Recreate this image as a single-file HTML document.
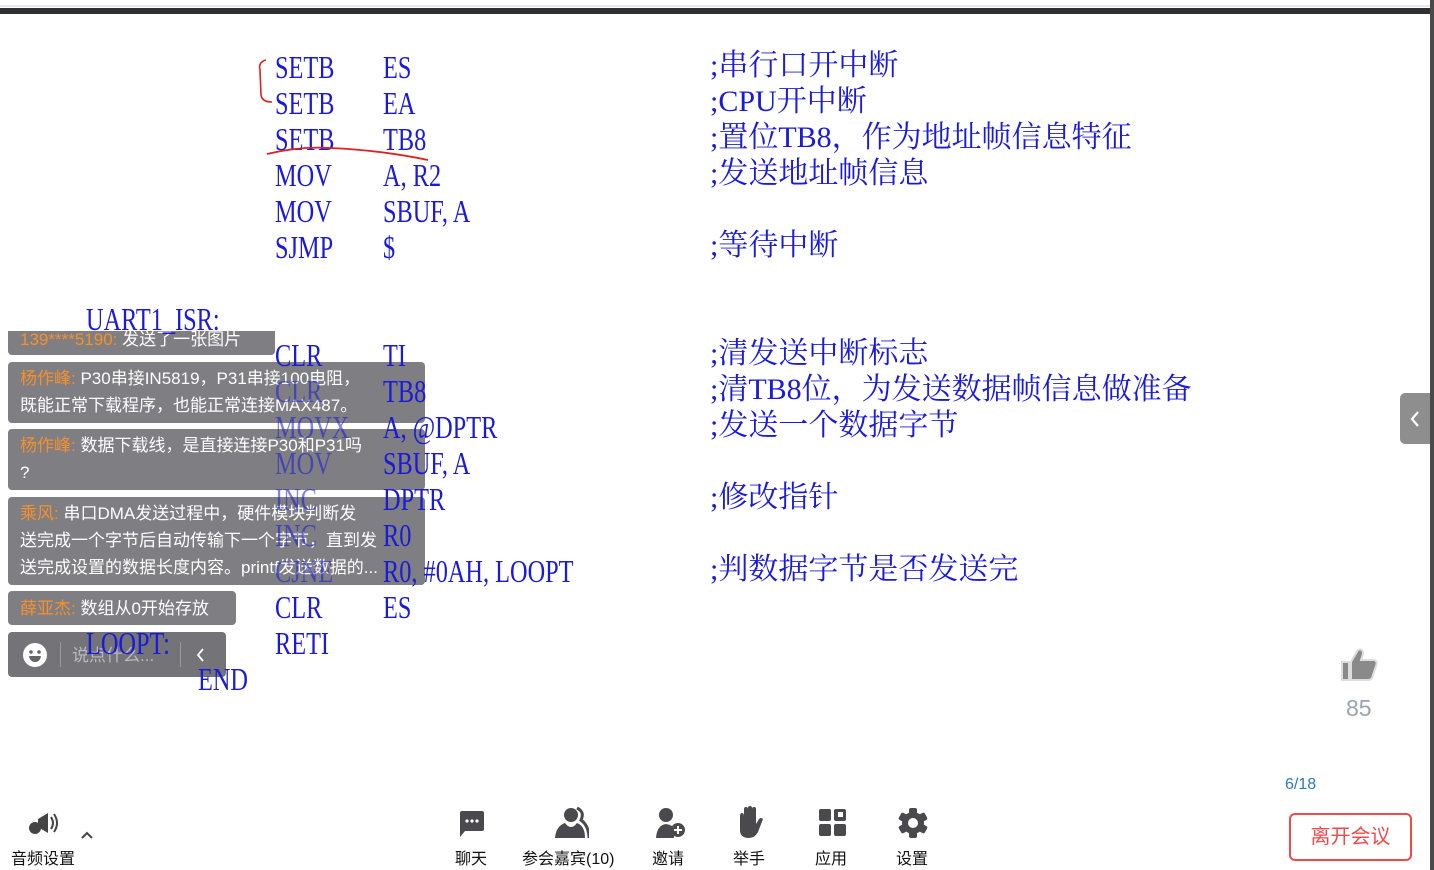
<!DOCTYPE html>
<html><head><meta charset="utf-8"><style>
*{margin:0;padding:0;box-sizing:border-box}
body{width:1434px;height:870px;background:#fff;position:relative;overflow:hidden;font-family:"Liberation Sans","Noto Sans CJK SC",sans-serif}
.c{position:absolute;font-family:"Liberation Serif","Noto Serif CJK SC",serif;font-size:32px;line-height:36px;color:#1a1ad8;white-space:nowrap;transform-origin:0 50%;transform:scaleX(0.76)}
.z{position:absolute;font-family:"Liberation Serif","Noto Serif CJK SC",serif;font-size:30px;line-height:36px;color:#1a1ad8;white-space:nowrap}
.b{position:absolute;left:8px;background:rgba(90,90,96,0.78);border-radius:4px;color:#fff;font-size:17px;line-height:27px;padding:0 12px;white-space:nowrap}
.b .n{color:#f7902a}
.t{position:absolute;top:845px;font-size:16px;color:#111;white-space:nowrap}
</style></head><body>
<div style="position:absolute;left:0;top:5px;width:1430px;height:2px;background:#e8e8ec"></div>
<div style="position:absolute;left:0;top:8px;width:1430px;height:6px;background:#2d3033"></div>
<div style="position:absolute;left:1430px;top:0;width:4px;height:870px;background:#4a4a4a"></div>

<!-- chat -->
<div class="b" style="top:331px;height:24px;line-height:18px;border-radius:0 0 4px 4px;width:267px;overflow:hidden"><span class="n">139****5190:</span> 发送了一张图片</div>
<div class="b" style="top:362px;height:61px;padding-top:3px;width:417px"><span class="n">杨作峰:</span> P30串接IN5819，P31串接100电阻，<br>既能正常下载程序，也能正常连接MAX487。</div>
<div class="b" style="top:429px;height:61px;padding-top:3px;width:417px"><span class="n">杨作峰:</span> 数据下载线，是直接连接P30和P31吗<br>?</div>
<div class="b" style="top:497px;height:88px;padding-top:3px;width:417px"><span class="n">乘风:</span> 串口DMA发送过程中，硬件模块判断发<br>送完成一个字节后自动传输下一个字节，直到发<br>送完成设置的数据长度内容。printf发送数据的...</div>
<div class="b" style="top:591px;height:34px;padding-top:4px;width:228px"><span class="n">薛亚杰:</span> 数组从0开始存放</div>
<div class="b" style="top:632px;height:45px;width:218px;background:rgba(90,90,96,0.85)">
 <svg style="position:absolute;left:14px;top:10px" width="26" height="26"><circle cx="13" cy="13" r="12" fill="#fff"/><circle cx="9" cy="10" r="1.8" fill="#666"/><circle cx="17" cy="10" r="1.8" fill="#666"/><path d="M7 14 H19 Q18 20 13 20 Q8 20 7 14Z" fill="#666"/></svg>
 <div style="position:absolute;left:52px;top:10px;width:1px;height:25px;background:#999"></div>
 <div style="position:absolute;left:64px;top:10px;color:#bbb;font-size:17px">说点什么...</div>
 <div style="position:absolute;left:172px;top:10px;width:1px;height:25px;background:#999"></div>
 <svg style="position:absolute;left:188px;top:15px" width="10" height="16"><path d="M7 2 L2 8 L7 14" fill="none" stroke="#fff" stroke-width="1.8"/></svg>
</div>

<!-- code -->
<div class="c" style="left:275px;top:49px">SETB</div><div class="c" style="left:383px;top:49px">ES</div><div class="z" style="left:710px;top:48px">;串行口开中断</div>
<div class="c" style="left:275px;top:85px">SETB</div><div class="c" style="left:383px;top:85px">EA</div><div class="z" style="left:710px;top:84px">;CPU开中断</div>
<div class="c" style="left:275px;top:121px">SETB</div><div class="c" style="left:383px;top:121px">TB8</div><div class="z" style="left:710px;top:120px">;置位TB8，作为地址帧信息特征</div>
<div class="c" style="left:275px;top:157px">MOV</div><div class="c" style="left:383px;top:157px">A, R2</div><div class="z" style="left:710px;top:156px">;发送地址帧信息</div>
<div class="c" style="left:275px;top:193px">MOV</div><div class="c" style="left:383px;top:193px">SBUF, A</div>
<div class="c" style="left:275px;top:229px">SJMP</div><div class="c" style="left:383px;top:229px">$</div><div class="z" style="left:710px;top:228px">;等待中断</div>
<div class="c" style="left:86px;top:301px">UART1_ISR:</div>
<div class="c" style="left:275px;top:337px">CLR</div><div class="c" style="left:383px;top:337px">TI</div><div class="z" style="left:710px;top:336px">;清发送中断标志</div>
<div class="c" style="left:275px;top:373px;opacity:.55">CLR</div><div class="c" style="left:383px;top:373px">TB8</div><div class="z" style="left:710px;top:372px">;清TB8位，为发送数据帧信息做准备</div>
<div class="c" style="left:275px;top:409px;opacity:.55">MOVX</div><div class="c" style="left:383px;top:409px">A, @DPTR</div><div class="z" style="left:710px;top:408px">;发送一个数据字节</div>
<div class="c" style="left:275px;top:445px;opacity:.55">MOV</div><div class="c" style="left:383px;top:445px">SBUF, A</div>
<div class="c" style="left:275px;top:481px;opacity:.55">INC</div><div class="c" style="left:383px;top:481px">DPTR</div><div class="z" style="left:710px;top:480px">;修改指针</div>
<div class="c" style="left:275px;top:517px;opacity:.55">INC</div><div class="c" style="left:383px;top:517px">R0</div>
<div class="c" style="left:275px;top:553px;opacity:.55">CJNE</div><div class="c" style="left:383px;top:553px">R0, #0AH, LOOPT</div><div class="z" style="left:710px;top:552px">;判数据字节是否发送完</div>
<div class="c" style="left:275px;top:589px">CLR</div><div class="c" style="left:383px;top:589px">ES</div>
<div class="c" style="left:275px;top:625px">RETI</div>
<div class="c" style="left:86px;top:625px">LOOPT:</div>
<div class="c" style="left:198px;top:661px">END</div>

<svg style="position:absolute;left:0;top:0" width="500" height="170"><path d="M266 60 Q258 62 260 70 L261 95 Q262 102 272 102" fill="none" stroke="#d22" stroke-width="1.6"/><path d="M267 154 Q300 146 330 148 Q380 150 428 160" fill="none" stroke="#d22" stroke-width="1.8"/></svg>

<!-- right -->
<div style="position:absolute;left:1400px;top:393px;width:30px;height:51px;background:#8e8e8e;border-radius:5px 0 0 5px"><svg style="position:absolute;left:9px;top:17px" width="12" height="18"><path d="M9 2 L3 9 L9 16" fill="none" stroke="#fff" stroke-width="2.2"/></svg></div>
<svg style="position:absolute;left:1338px;top:646px" width="42" height="38"><path d="M4 16 H11 V34 H4Z M13 16 L20 4 Q25 2 25 8 L23 14 H36 Q40 15 38 20 L34 32 Q33 34 30 34 H13Z" fill="#8a8a8a" stroke="#ddd" stroke-width="2"/></svg>
<div style="position:absolute;left:1346px;top:695px;font-size:23px;color:#9aa3b0">85</div>
<div style="position:absolute;left:1285px;top:776px;font-size:16px;color:#2a7ac0">6/18</div>
<div style="position:absolute;left:1289px;top:813px;width:123px;height:48px;border:2px solid #f04a4a;border-radius:6px;color:#f04a4a;font-size:20px;line-height:44px;text-align:center">离开会议</div>

<!-- toolbar -->
<svg style="position:absolute;left:26px;top:811px" width="40" height="26"><circle cx="9" cy="17" r="6" fill="#444"/><path d="M12 8 L22 2 V22 L12 16Z" fill="#444"/><path d="M25 6 Q29 12 25 18 M28 3 Q34 12 28 21" fill="none" stroke="#444" stroke-width="2"/></svg>
<svg style="position:absolute;left:80px;top:830px" width="14" height="10"><path d="M2 8 L7 3 L12 8" fill="none" stroke="#444" stroke-width="2"/></svg>
<div class="t" style="left:11px">音频设置</div>
<svg style="position:absolute;left:457px;top:809px" width="30" height="30"><path d="M3 4 Q3 2 5 2 H25 Q27 2 27 4 V20 Q27 22 25 22 H8 L3 28Z" fill="#4a4a4e"/><circle cx="10" cy="12" r="1.6" fill="#fff"/><circle cx="15" cy="12" r="1.6" fill="#fff"/><circle cx="20" cy="12" r="1.6" fill="#fff"/></svg>
<div class="t" style="left:455px">聊天</div>
<svg style="position:absolute;left:551px;top:806px" width="38" height="32"><circle cx="20" cy="9" r="7" fill="#4a4a4e"/><path d="M4 32 Q5 20 14 17 Q20 25 26 17 Q34 20 34 32Z" fill="#4a4a4e"/><path d="M26 2 Q34 6 30 14 Q38 20 38 32" fill="none" stroke="#4a4a4e" stroke-width="3"/></svg>
<div class="t" style="left:522px">参会嘉宾(10)</div>
<svg style="position:absolute;left:654px;top:806px" width="34" height="32"><circle cx="12" cy="9" r="7" fill="#4a4a4e"/><path d="M2 32 Q3 19 12 18 Q18 19 20 22 V32Z" fill="#4a4a4e"/><circle cx="24" cy="24" r="7" fill="#4a4a4e"/><path d="M24 20 V28 M20 24 H28" stroke="#fff" stroke-width="2"/></svg>
<div class="t" style="left:652px">邀请</div>
<svg style="position:absolute;left:736px;top:806px" width="30" height="32"><path d="M4 10 Q4 7 6 7 Q8 7 8 10 V3 Q8 1 10 1 Q12 1 12 3 V2 Q12 0 14 0 Q16 0 16 2 V3 Q16 1 18 1 Q20 1 20 3 V18 L23 13 Q25 11 27 13 L22 26 Q19 32 13 32 Q4 32 4 24Z" fill="#4a4a4e"/></svg>
<div class="t" style="left:733px">举手</div>
<svg style="position:absolute;left:818px;top:808px" width="30" height="30"><rect x="1" y="1" width="12" height="12" rx="2" fill="#4a4a4e"/><rect x="16" y="1" width="12" height="12" rx="2" fill="#4a4a4e"/><rect x="20" y="4" width="5" height="5" fill="#fff"/><rect x="1" y="16" width="12" height="12" rx="2" fill="#4a4a4e"/><rect x="16" y="16" width="12" height="12" rx="2" fill="#4a4a4e"/></svg>
<div class="t" style="left:815px">应用</div>
<svg style="position:absolute;left:897px;top:807px" width="32" height="32" viewBox="-16 -16 32 32"><g fill="#4a4a4e"><circle r="11"/><rect x="-4" y="-15" width="8" height="30" rx="2"/><rect x="-4" y="-15" width="8" height="30" rx="2" transform="rotate(60)"/><rect x="-4" y="-15" width="8" height="30" rx="2" transform="rotate(120)"/></g><circle r="5" fill="#fff"/></svg>
<div class="t" style="left:896px">设置</div>
</body></html>
